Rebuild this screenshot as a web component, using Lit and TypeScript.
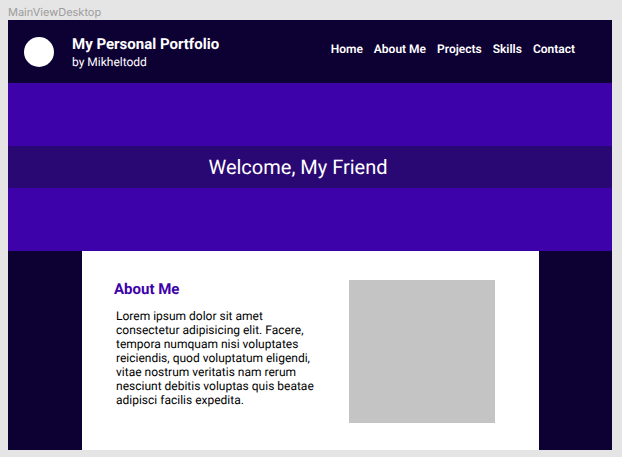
import { LitElement, html, css } from "lit";
import { customElement } from "lit/decorators.js";

const LINKS = [
  { label: "Home", href: "#home" },
  { label: "About Me", href: "#about" },
  { label: "Projects", href: "#projects" },
  { label: "Skills", href: "#skills" },
  { label: "Contact", href: "#contact" },
];

@customElement("app-root")
export class AppRoot extends LitElement {
  static styles = css`
    :host {
      display: block;
      box-sizing: border-box;
      min-height: 100vh;
      padding: 4px 10px 8px 8px;
      background: #e5e5e5;
      color: #000;
      font-family: Roboto, sans-serif;
      font-size: 12px;
      line-height: 14px;
      text-rendering: geometricPrecision;
    }
    h1, h2, p { margin: 0; }
    .frame-label {
      height: 16px;
      line-height: 16px;
      font-family: Inter, sans-serif;
      font-size: 11px;
      color: #9c9c9c;
    }
    .frame { background: #0d0033; }
    .header {
      display: flex;
      align-items: center;
      min-height: 63px;
      padding: 0 37px 0 16px;
      box-sizing: border-box;
      color: #fff;
    }
    .avatar {
      flex: none;
      width: 30px;
      height: 30px;
      margin-right: 18px;
      border-radius: 50%;
      background: #fff;
    }
    .title {
      font-size: 15px;
      line-height: 20px;
      font-weight: 700;
    }
    .byline { line-height: 16px; }
    .nav {
      display: flex;
      gap: 11px;
      margin-left: auto;
      padding-bottom: 5px;
    }
    .link {
      color: inherit;
      font-weight: 600;
      text-decoration: none;
      white-space: nowrap;
    }
    .hero {
      padding: 63px 0;
      background: #3d02aa;
    }
    .welcome {
      padding: 0 24px 0 0;
      background: #2a0873;
      color: #fff;
      font-size: 20px;
      line-height: 42px;
      font-weight: 400;
      text-align: center;
    }
    .main { padding: 0 73px 0 74px; }
    .about {
      display: flex;
      justify-content: space-between;
      gap: 24px;
      padding: 29px 44px 27px 32px;
      background: #fff;
    }
    .heading {
      color: #3d02aa;
      font-size: 15px;
      line-height: 18px;
      font-weight: 700;
    }
    .text {
      max-width: 204px;
      margin: 11px 0 0 2px;
    }
    .picture {
      flex: none;
      width: 146px;
      height: 143px;
      background: #c4c4c4;
    }
  `;

  render() {
    return html`
      <div class="frame-label">MainViewDesktop</div>
      <div class="frame" id="home">
        <header class="header">
          <div class="avatar"></div>
          <div>
            <div class="title">My Personal Portfolio</div>
            <p class="byline">by Mikheltodd</p>
          </div>
          <nav class="nav">
            ${LINKS.map((l) => html`<a class="link" href=${l.href}>${l.label}</a>`)}
          </nav>
        </header>
        <section class="hero">
          <h1 class="welcome">Welcome, My Friend</h1>
        </section>
        <main class="main">
          <section class="about" id="about">
            <div>
              <h2 class="heading">About Me</h2>
              <p class="text">
                Lorem ipsum dolor sit amet consectetur adipisicing elit. Facere,
                tempora numquam nisi voluptates reiciendis, quod voluptatum
                eligendi, vitae nostrum veritatis nam rerum nesciunt debitis
                voluptas quis beatae adipisci facilis expedita.
              </p>
            </div>
            <div class="picture"></div>
          </section>
        </main>
      </div>
    `;
  }
}
